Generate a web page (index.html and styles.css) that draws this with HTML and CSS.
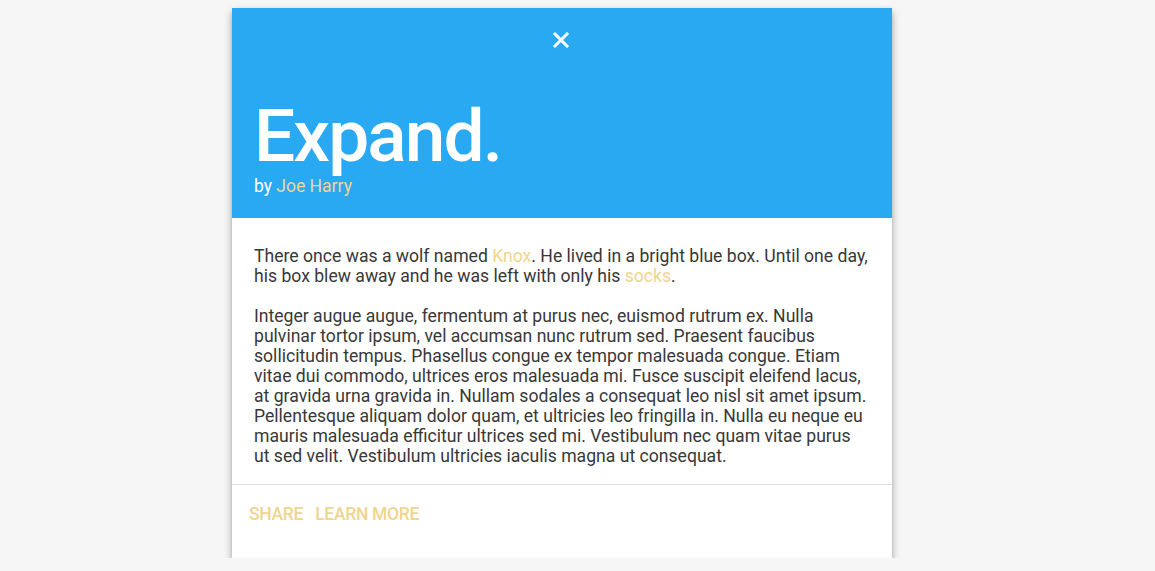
FILE: index.html
```html
<!DOCTYPE html>
<html>
<head>
<meta charset="utf-8">
<link rel="stylesheet" href="styles.css">
</head>
<body>
<div class="card">
  <header class="card-head">
    <div class="close-row">
      <svg class="close" width="18" height="18" viewBox="0 0 18 18"><path d="M3 3 L15 15 M15 3 L3 15" stroke="#fff" stroke-width="3" stroke-linecap="square"/></svg>
    </div>
    <h1 class="title">Expand.</h1>
    <div class="byline">by <span class="accent">Joe Harry</span></div>
  </header>
  <section class="card-body">
    <p>There once was a wolf named <span class="accent">Knox</span>. He lived in a bright blue box. Until one day, his box blew away and he was left with only his <span class="accent">socks</span>.</p>
    <p>Integer augue augue, fermentum at purus nec, euismod rutrum ex. Nulla pulvinar tortor ipsum, vel accumsan nunc rutrum sed. Praesent faucibus sollicitudin tempus. Phasellus congue ex tempor malesuada congue. Etiam vitae dui commodo, ultrices eros malesuada mi. Fusce suscipit eleifend lacus, at gravida urna gravida in. Nullam sodales a consequat leo nisl sit amet ipsum. Pellentesque aliquam dolor quam, et ultricies leo fringilla in. Nulla eu neque eu mauris malesuada efficitur ultrices sed mi. Vestibulum nec quam vitae purus ut sed velit. Vestibulum ultricies iaculis magna ut consequat.</p>
  </section>
  <footer class="card-foot">
    <a class="btn">Share</a>
    <a class="btn">Learn More</a>
  </footer>
</div>
</body>
</html>
```
FILE: styles.css
```css
html, body {
  margin: 0;
  padding: 0;
}
body {
  background: #f6f6f6;
  font-family: Roboto, "Liberation Sans", sans-serif;
  padding-top: 8px;
}
.card {
  width: 660px;
  margin-left: 232px;
  background: #fff;
  box-shadow: 0 5px 8px rgba(0,0,0,0.3), 0 1px 4px rgba(0,0,0,0.1);
}
.card-head {
  background: #2aa9f3;
  height: 210px;
  box-sizing: border-box;
  padding: 0 22px;
  display: flex;
  flex-direction: column;
  color: #fff;
}
.close-row {
  display: flex;
  justify-content: center;
  padding-top: 23px;
  height: 37px;
  margin-right: 2px;
}
.title {
  margin: 35px 0 0 0;
  font-size: 73px;
  font-weight: 500;
  line-height: 66px;
  letter-spacing: -1.9px;
}
.byline {
  font-size: 17.5px;
  line-height: 20px;
  margin-top: 7px;
}
.accent {
  color: #f0d58e;
}
.card-body {
  padding: 28px 24px 18px 22px;
  color: #383838;
  font-size: 17.6px;
  line-height: 20px;
}
.card-body p {
  margin: 0 0 20px 0;
}
.card-body p:last-child {
  margin-bottom: 0;
}
.card-foot {
  border-top: 1px solid #e0e0e0;
  padding: 19px 16px 0 17px;
  height: 54px;
  display: flex;
  gap: 12px;
}
.btn {
  color: #f0d58e;
  text-transform: uppercase;
  font-weight: 500;
  font-size: 17.5px;
  line-height: 20px;
  letter-spacing: -0.3px;
}
```
